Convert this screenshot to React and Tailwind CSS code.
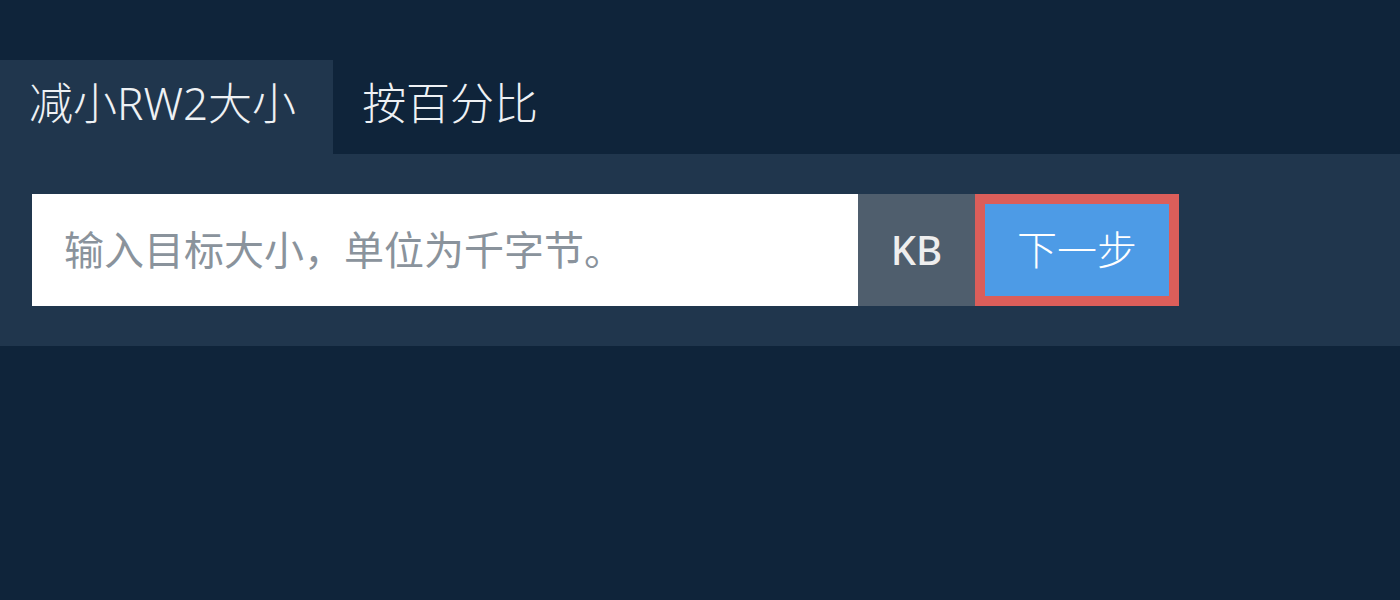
import React, { useState } from 'react';

const tabs = ['减小RW2大小', '按百分比'];

const App = () => {
    const [active, setActive] = useState(0);
    const [value, setValue] = useState('');

    return (
        <div
            className="min-h-[600px] w-full bg-[#0f243a] pt-[60px]"
            style={{ fontFamily: '"Noto Sans", "Noto Sans CJK SC", sans-serif' }}
        >
            {/* tabs */}
            <div className="flex h-[94px]">
                {tabs.map((tab, i) => (
                    <button
                        key={tab}
                        onClick={() => setActive(i)}
                        className={`h-full pl-[29px] pr-[37px] pb-[8px] text-[44px] font-light text-[#eef1f4] leading-none ${active === i ? 'bg-[#20364d]' : 'bg-transparent'}`}
                    >
                        {tab}
                    </button>
                ))}
            </div>

            {/* panel */}
            <div className="bg-[#20364d] px-8 py-10">
                <div className="flex h-[112px]">
                    <input
                        type="text"
                        value={value}
                        onChange={(e) => setValue(e.target.value)}
                        placeholder="输入目标大小，单位为千字节。"
                        className="w-[826px] bg-white px-8 text-[40px] text-gray-700 outline-none placeholder:text-[#8a939c]"
                    />
                    <div className="flex w-[117px] items-center justify-center bg-[#4f5e6d] text-[40px] font-medium text-[#eeeeee]">
                        KB
                    </div>
                    <button className="w-[204px] border-[10px] border-[#db5e5a] bg-[#4d9be6] text-[40px] font-light text-white">
                        下一步
                    </button>
                </div>
            </div>
        </div>
    );
};

export default App;
